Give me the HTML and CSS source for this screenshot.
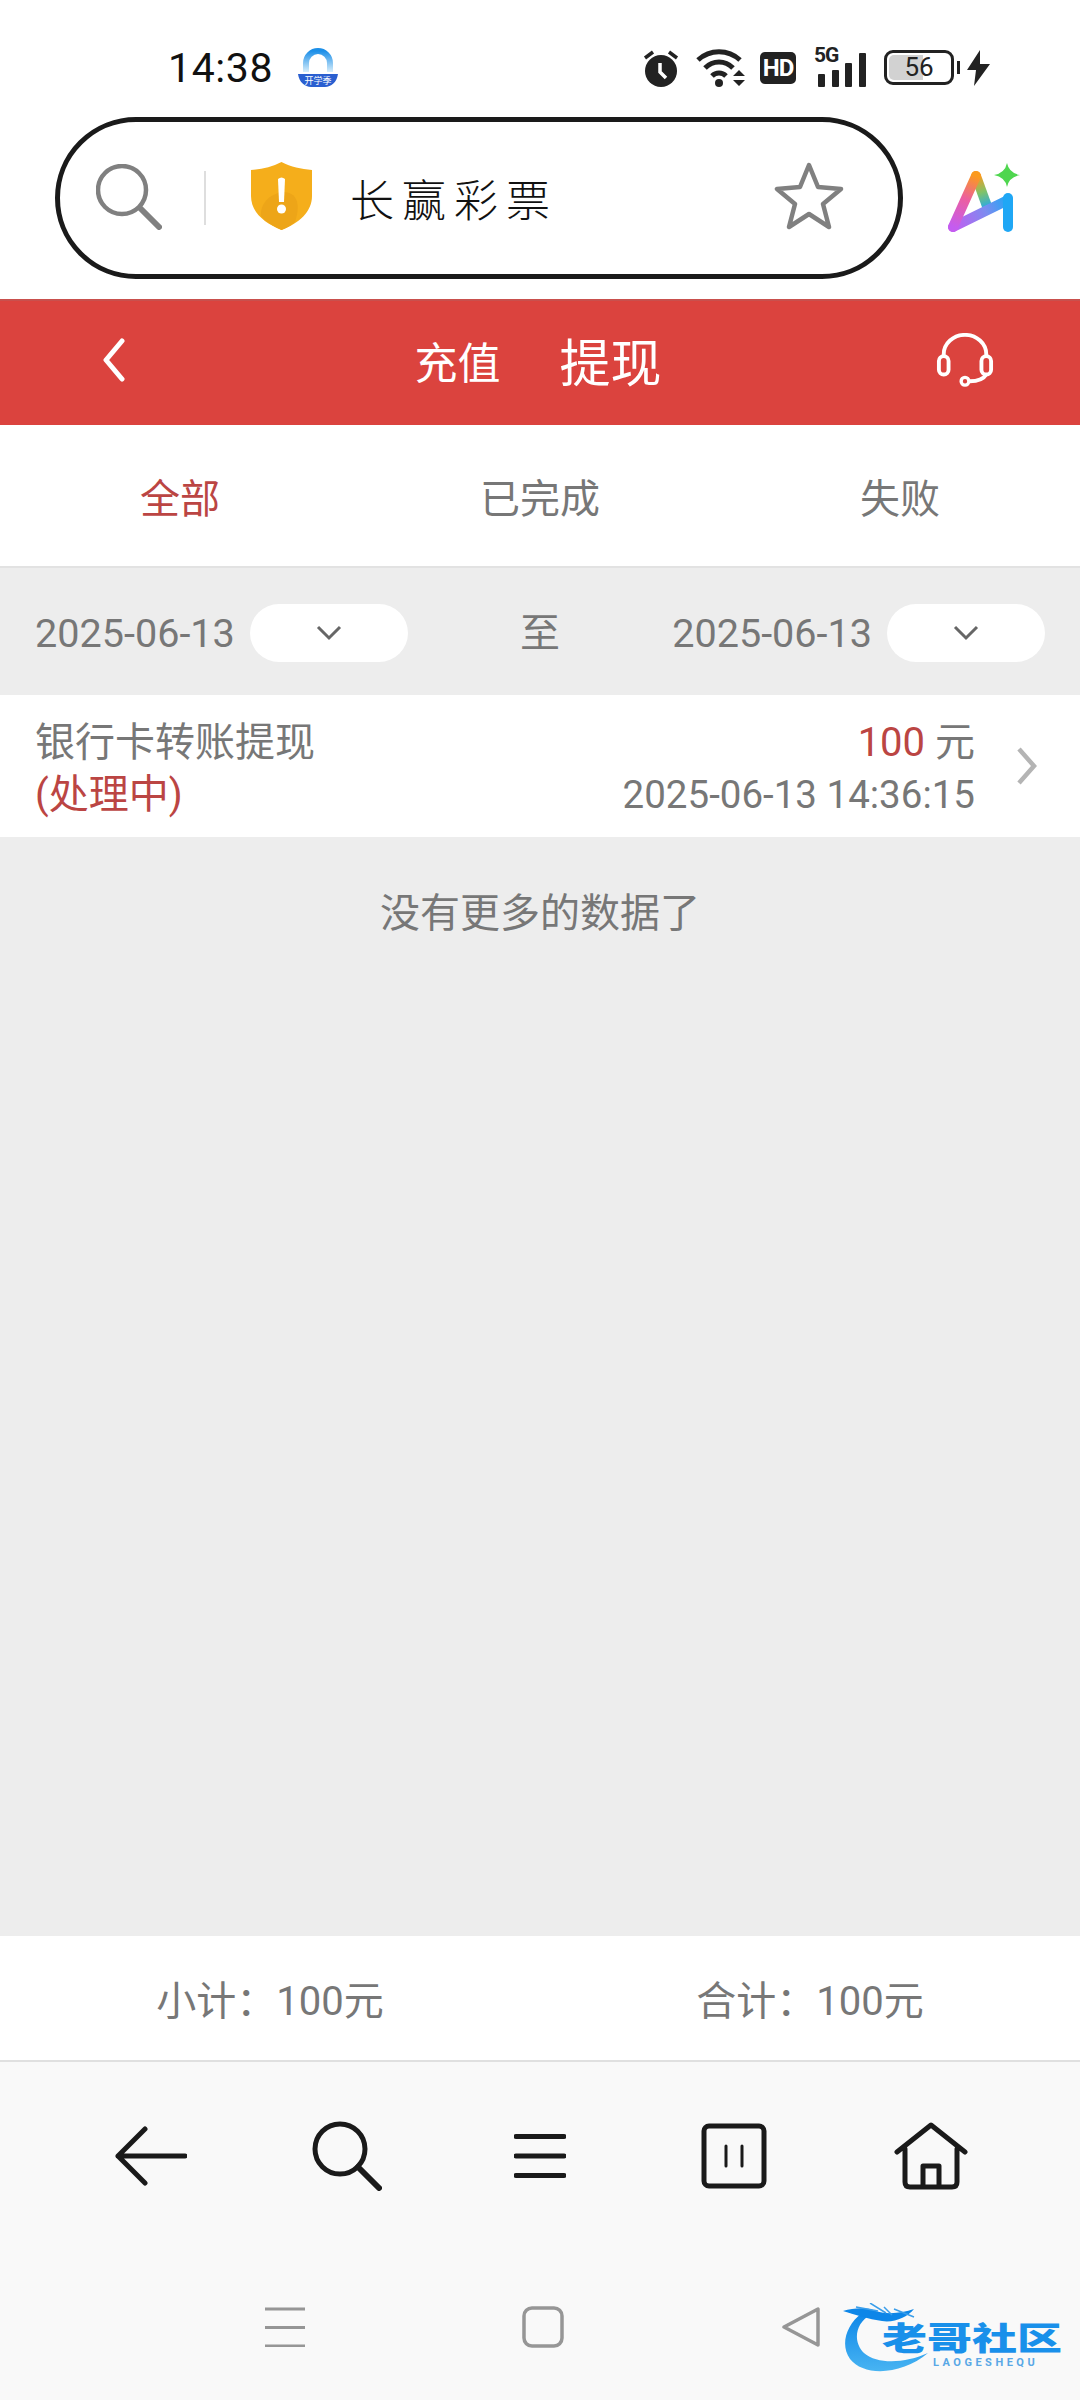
FILE: index.html
```html
<!DOCTYPE html>
<html lang="zh-CN">
<head>
    <meta charset="UTF-8">
    <meta name="viewport" content="width=device-width, initial-scale=1.0">
    <title>提现</title>
    <link rel="stylesheet" href="styles.css">
</head>
<body>
    <div class="status-bar">
        <span class="clock">14:38</span>
        <svg class="app-badge" width="42" height="40" viewBox="0 0 42 40">
            <defs>
                <linearGradient id="archFill" x1="0" y1="0" x2="0" y2="1">
                    <stop offset="0" stop-color="#1c8fe8"/>
                    <stop offset="1" stop-color="#d8eefb"/>
                </linearGradient>
            </defs>
            <path d="M9 24 V15 A12 12 0 0 1 33 15 V24" fill="none" stroke="url(#archFill)" stroke-width="6"/>
            <path d="M1 26 H41 C40 34 34 39 28 39 H14 C8 39 2 34 1 26Z" fill="#2a5fd0"/>
            <text x="21" y="36" text-anchor="middle" font-size="9" fill="#fff" font-family="Noto Sans CJK SC, sans-serif">开学季</text>
        </svg>
        <div class="status-icons">
            <svg class="alarm" width="36" height="38" viewBox="0 0 36 38">
                <circle cx="18" cy="22" r="16" fill="#222"/>
                <path d="M2 9 L10 3 M34 9 L26 3" stroke="#222" stroke-width="3.5"/>
                <path d="M17 14 V23 L23 29" fill="none" stroke="#fff" stroke-width="3.5"/>
            </svg>
            <svg width="50" height="40" viewBox="0 0 50 40">
                <path d="M2 12 C14 1 32 1 44 12" fill="none" stroke="#222" stroke-width="5"/>
                <path d="M9 20 C17 12 29 12 37 20" fill="none" stroke="#222" stroke-width="5"/>
                <path d="M16 28 C20 24 26 24 30 28" fill="none" stroke="#222" stroke-width="5"/>
                <circle cx="23" cy="35" r="4" fill="#222"/>
                <path d="M43 22 L49 28 H37Z M37 32 H49 L43 38Z" fill="#222"/>
            </svg>
            <span class="hd-badge">HD</span>
            <div class="signal">
                <span class="signal-label">5G</span>
                <svg width="53" height="36" viewBox="0 0 53 36">
                    <rect x="4" y="23" width="7" height="13" rx="1" fill="#222"/>
                    <rect x="18" y="19" width="7" height="17" rx="1" fill="#222"/>
                    <rect x="31" y="12" width="7" height="24" rx="1" fill="#222"/>
                    <rect x="45" y="2" width="7" height="34" rx="1" fill="#222"/>
                </svg>
            </div>
            <div class="battery"><span class="battery-fill"></span><span class="battery-num">56</span></div>
            <svg class="bolt" width="23" height="36" viewBox="0 0 23 36">
                <path d="M13 0 L0 20 H9 L7 36 L23 14 H13Z" fill="#222"/>
            </svg>
        </div>
    </div>

    <div class="address-row">
        <div class="address-pill">
            <svg class="address-search" width="66" height="66" viewBox="0 0 66 66">
                <circle cx="26" cy="26" r="24" fill="none" stroke="#808080" stroke-width="4.5"/>
                <path d="M44 44 L63 63" stroke="#808080" stroke-width="6" stroke-linecap="round"/>
            </svg>
            <span class="address-divider"></span>
            <svg class="shield" width="61" height="68" viewBox="0 0 61 68">
                <path d="M30.5 0 C40 5 50 7 61 8 V34 C61 50 48 61 30.5 68 C13 61 0 50 0 34 V8 C11 7 21 5 30.5 0Z" fill="#f5ae1b"/>
                <path d="M30.5 68 C22 64 15 60 10 54 C9 42 18 32 32 30 C46 30 50 42 44 60 C40 63 36 66 30.5 68Z" fill="#eda518"/>
                <path d="M27 17 Q30.5 14 34 17 L33 40 H28Z" fill="#fff"/>
                <circle cx="30.5" cy="47" r="4.5" fill="#fff"/>
            </svg>
            <span class="site-name">长赢彩票</span>
            <svg class="star" width="70" height="68" viewBox="0 0 70 68">
                <path d="M35 3 L44 25 L67 27 L49 42 L55 65 L35 52 L15 65 L21 42 L3 27 L26 25Z" fill="none" stroke="#808080" stroke-width="4.5" stroke-linejoin="round"/>
            </svg>
        </div>
        <svg class="ai-icon" width="74" height="72" viewBox="0 0 74 72">
            <defs>
                <linearGradient id="aiLeft" gradientUnits="userSpaceOnUse" x1="6" y1="65" x2="29" y2="14">
                    <stop offset="0" stop-color="#c45cf0"/>
                    <stop offset="0.55" stop-color="#ec5fa0"/>
                    <stop offset="1" stop-color="#fb9a1e"/>
                </linearGradient>
                <linearGradient id="aiBar" gradientUnits="userSpaceOnUse" x1="6" y1="65" x2="61" y2="38">
                    <stop offset="0" stop-color="#c45cf0"/>
                    <stop offset="0.6" stop-color="#7c8cf0"/>
                    <stop offset="1" stop-color="#1fa7f5"/>
                </linearGradient>
                <linearGradient id="aiRight" gradientUnits="userSpaceOnUse" x1="29" y1="14" x2="41" y2="47">
                    <stop offset="0" stop-color="#fb9a1e"/>
                    <stop offset="0.5" stop-color="#7fc36a"/>
                    <stop offset="1" stop-color="#1fa7f5"/>
                </linearGradient>
            </defs>
            <path d="M29 14 L41 47" fill="none" stroke="url(#aiRight)" stroke-width="10" stroke-linecap="round"/>
            <path d="M6 65 L61 38" fill="none" stroke="url(#aiBar)" stroke-width="10" stroke-linecap="round"/>
            <path d="M61 36 V65" fill="none" stroke="#1fa7f5" stroke-width="10" stroke-linecap="round"/>
            <path d="M6 65 L29 14" fill="none" stroke="url(#aiLeft)" stroke-width="10" stroke-linecap="round"/>
            <path d="M60 1 Q62 11 73 13 Q62 15 60 25 Q58 15 47 13 Q58 11 60 1Z" fill="#4fd64f"/>
        </svg>
    </div>

    <div class="top-bar">
        <svg class="back-icon" width="24" height="44" viewBox="0 0 24 44">
            <path d="M20 3 L4 22 L20 41" fill="none" stroke="#fff" stroke-width="5" stroke-linecap="round" stroke-linejoin="round"/>
        </svg>
        <div class="top-tabs">
            <span class="top-tab">充值</span>
            <span class="top-tab top-tab-on">提现</span>
        </div>
        <svg class="service-icon" width="58" height="54" viewBox="0 0 60 54">
            <path d="M8 22 V21 A22 20 0 0 1 52 21 V22" fill="none" stroke="#fff" stroke-width="4"/>
            <rect x="3" y="23" width="10" height="19" rx="5" fill="none" stroke="#fff" stroke-width="4"/>
            <rect x="47" y="23" width="10" height="19" rx="5" fill="none" stroke="#fff" stroke-width="4"/>
            <path d="M52 42 C49 47 43 49 35 49" fill="none" stroke="#fff" stroke-width="4"/>
            <circle cx="30" cy="49" r="4" fill="none" stroke="#fff" stroke-width="3.5"/>
        </svg>
    </div>

    <div class="status-tabs">
        <span class="status-tab status-tab-on">全部</span>
        <span class="status-tab">已完成</span>
        <span class="status-tab">失败</span>
    </div>

    <main class="content">
        <div class="date-row">
            <div class="date-field">
                <span class="date-text">2025-06-13</span>
                <span class="date-pill">
                    <svg width="26" height="16" viewBox="0 0 26 16"><path d="M2 2 L13 13 L24 2" fill="none" stroke="#666" stroke-width="3"/></svg>
                </span>
            </div>
            <span class="date-to">至</span>
            <div class="date-field">
                <span class="date-text">2025-06-13</span>
                <span class="date-pill">
                    <svg width="26" height="16" viewBox="0 0 26 16"><path d="M2 2 L13 13 L24 2" fill="none" stroke="#666" stroke-width="3"/></svg>
                </span>
            </div>
        </div>

        <div class="record">
            <div class="record-left">
                <div>银行卡转账提现</div>
                <div class="red">(处理中)</div>
            </div>
            <div class="record-right">
                <div class="record-amount"><span class="red">100</span> 元</div>
                <div>2025-06-13 14:36:15</div>
            </div>
            <svg class="record-arrow" width="22" height="40" viewBox="0 0 22 40">
                <path d="M3 3 L18 20 L3 37" fill="none" stroke="#b4b4b4" stroke-width="4.5"/>
            </svg>
        </div>

        <p class="no-more">没有更多的数据了</p>
    </main>

    <div class="summary">
        <span>小计：100元</span>
        <span>合计：100元</span>
    </div>

    <div class="browser-bar">
        <div class="tool">
            <svg class="tool-back" width="72" height="60" viewBox="0 0 72 60">
                <path d="M30 3 L3 30 L30 57 M3 30 H70" fill="none" stroke="#1a1a1a" stroke-width="5" stroke-linecap="round" stroke-linejoin="round"/>
            </svg>
        </div>
        <div class="tool">
            <svg class="tool-search" width="70" height="70" viewBox="0 0 70 70">
                <circle cx="28" cy="28" r="25" fill="none" stroke="#1a1a1a" stroke-width="5"/>
                <path d="M46 46 L67 67" stroke="#1a1a1a" stroke-width="6" stroke-linecap="round"/>
            </svg>
        </div>
        <div class="tool">
            <svg class="tool-menu" width="52" height="46" viewBox="0 0 52 46">
                <path d="M2 3.500 H50 M2 23 H50 M2 42.500 H50" stroke="#1a1a1a" stroke-width="5" stroke-linecap="round"/>
            </svg>
        </div>
        <div class="tool">
            <svg class="tool-tabs" width="66" height="66" viewBox="0 0 66 66">
                <rect x="3" y="3" width="60" height="60" rx="5" fill="none" stroke="#1a1a1a" stroke-width="5"/>
                <path d="M25 23 V43 M41 23 V43" stroke="#1a1a1a" stroke-width="3" stroke-linecap="round"/>
            </svg>
        </div>
        <div class="tool">
            <svg class="tool-home" width="74" height="68" viewBox="0 0 74 68">
                <path d="M3 30 L37 3 L71 30 M11 27 V60 Q11 65 16 65 H58 Q63 65 63 60 V27 M29 65 V44 H45 V65" fill="none" stroke="#1a1a1a" stroke-width="5" stroke-linecap="round" stroke-linejoin="round"/>
            </svg>
        </div>
    </div>

    <div class="system-nav">
        <div class="nav-key">
            <svg width="42" height="40" viewBox="0 0 42 40"><path d="M1 2 H41 M1 20.500 H41 M1 39 H41" stroke="#969696" stroke-width="3"/></svg>
        </div>
        <div class="nav-key">
            <svg width="42" height="42" viewBox="0 0 42 42"><rect x="2" y="2" width="38" height="38" rx="8" fill="none" stroke="#969696" stroke-width="3.500"/></svg>
        </div>
        <div class="nav-key">
            <svg width="40" height="40" viewBox="0 0 40 40"><path d="M3 20 L37 2 V38Z" fill="none" stroke="#969696" stroke-width="3.500" stroke-linejoin="round"/></svg>
        </div>

        <div class="watermark">
            <svg class="watermark-dragon" width="100" height="72" viewBox="0 0 100 72">
                <defs>
                    <linearGradient id="ringFill" x1="0" y1="0" x2="0" y2="1">
                        <stop offset="0" stop-color="#0d86e8"/>
                        <stop offset="1" stop-color="#48b4f2"/>
                    </linearGradient>
                </defs>
                <path d="M20 10 C4 22 -2 42 8 56 C22 74 60 72 86 50 C64 60 36 62 22 50 C10 38 14 20 28 12Z" fill="url(#ringFill)"/>
                <path d="M1 8 C12 5 24 4 34 8 C46 12 60 10 72 6 C66 14 52 20 40 18 C26 16 14 12 1 8Z" fill="#0d86e8"/>
                <path d="M14 4 L36 8 M28 0 L44 10 M42 4 L50 12 M52 6 L72 14" stroke="#3a9eea" stroke-width="1.500" fill="none"/>
            </svg>
            <span class="watermark-name">老哥社区</span>
            <span class="watermark-pinyin">LAOGESHEQU</span>
        </div>
    </div>
</body>
</html>
```

FILE: styles.css
```css
* {
    box-sizing: border-box;
}
body {
    display: flex;
    flex-direction: column;
    width: 1080px;
    height: 2400px;
    margin: 0;
    background-color: #ededed;
    font-family: Roboto, "Noto Sans CJK SC", sans-serif;
    font-size: 40px;
    color: #777;
    overflow: hidden;
}

/* phone status bar */
.status-bar {
    display: flex;
    align-items: center;
    height: 117px;
    padding: 18px 90px 0 168px;
    background-color: #fff;
    color: #111;
}
.clock {
    font-size: 41px;
    letter-spacing: 0.6px;
}
.app-badge {
    margin-left: 24px;
}
.status-icons {
    display: flex;
    align-items: center;
    margin-left: auto;
}
.alarm {
    margin-right: 17px;
}
.hd-badge {
    width: 36px;
    height: 32px;
    margin-left: 14px;
    border-radius: 5px;
    background-color: #222;
    color: #fff;
    font-size: 24px;
    font-weight: 700;
    line-height: 32px;
    text-align: center;
    letter-spacing: -1px;
}
.signal {
    position: relative;
    width: 53px;
    height: 36px;
    margin-left: 18px;
}
.signal-label {
    position: absolute;
    top: -6px;
    left: 0;
    color: #222;
    font-size: 21px;
    font-weight: 700;
    line-height: 22px;
    letter-spacing: -1px;
}
.battery {
    position: relative;
    width: 70px;
    height: 35px;
    margin-left: 17px;
    border: 3px solid #222;
    border-radius: 9px;
    font-size: 26px;
    line-height: 29px;
    text-align: center;
    color: #222;
}
.battery::after {
    content: "";
    position: absolute;
    top: 8px;
    right: -9px;
    width: 3px;
    height: 13px;
    background-color: #222;
}
.battery-fill {
    position: absolute;
    top: 2px;
    bottom: 2px;
    left: 2px;
    width: 34px;
    border-radius: 5px 0 0 5px;
    background-color: #d2d2d2;
}
.battery-num {
    position: relative;
}
.bolt {
    margin-left: 13px;
}

/* browser address bar */
.address-row {
    display: flex;
    align-items: center;
    height: 182px;
    padding: 0 0 20px 55px;
    background-color: #fff;
}
.address-pill {
    display: flex;
    align-items: center;
    width: 848px;
    height: 162px;
    padding-left: 36px;
    border: 5px solid #1a1a1a;
    border-radius: 81px;
}
.address-search {
    margin-bottom: 2px;
}
.address-divider {
    width: 2px;
    height: 54px;
    margin-left: 42px;
    background-color: #dedede;
}
.shield {
    margin-left: 45px;
    margin-bottom: 4px;
}
.site-name {
    margin-left: 38px;
    color: #111;
    font-size: 44px;
    font-weight: 300;
    letter-spacing: 8px;
}
.star {
    margin-left: auto;
    margin-right: 54px;
    margin-bottom: 5px;
}
.ai-icon {
    margin-left: 44px;
}

/* red title bar */
.top-bar {
    display: flex;
    align-items: center;
    justify-content: space-between;
    height: 126px;
    padding: 0 86px 7px 102px;
    border-top: 2px solid #c9504d;
    background-color: #db433e;
    color: #fff;
}
.top-tabs {
    display: flex;
    align-items: center;
    gap: 59px;
    margin-left: 14px;
}
.top-tab {
    font-size: 43px;
}
.top-tab-on {
    font-size: 51px;
}

/* status filter */
.status-tabs {
    display: grid;
    grid-template-columns: 1fr 1fr 1fr;
    height: 143px;
    align-items: center;
    border-bottom: 2px solid #e2e2e2;
    background-color: #fff;
    text-align: center;
}
.status-tab-on {
    color: #bb4543;
}

.content {
    flex: 1;
}
.date-row {
    display: flex;
    align-items: center;
    justify-content: space-between;
    height: 127px;
    padding: 2px 35px 0;
}
.date-field {
    display: flex;
    align-items: center;
    gap: 15px;
}
.date-text {
    padding-top: 2px;
    font-size: 39.6px;
}
.date-pill {
    display: flex;
    align-items: center;
    justify-content: center;
    width: 158px;
    height: 58px;
    border-radius: 29px;
    background-color: #fff;
}
.date-to {
    padding-bottom: 6px;
}

.record {
    display: flex;
    align-items: center;
    height: 142px;
    padding: 6px 42px 0 35px;
    background-color: #fff;
    line-height: 52px;
}
.record-right {
    margin-left: auto;
    font-size: 38.5px;
    text-align: right;
}
.record-amount {
    font-size: 40px;
}
.record-arrow {
    margin-left: 41px;
    margin-bottom: 6px;
}
.red {
    color: #bb4543;
}
.no-more {
    margin: 51px 0 0;
    line-height: 52px;
    text-align: center;
}

.summary {
    display: grid;
    grid-template-columns: 1fr 1fr;
    height: 126px;
    align-items: center;
    border-bottom: 2px solid #e0e0e0;
    background-color: #fff;
    text-align: center;
}

/* browser bottom bar */
.browser-bar {
    display: grid;
    grid-template-columns: repeat(5, 195px);
    height: 191px;
    padding: 0 0 3px 52px;
    background-color: #f9f9f9;
}
.tool {
    display: flex;
    align-items: center;
    justify-content: center;
}
.tool-back {
    margin-left: 2px;
}
.tool-search {
    margin-left: 4px;
}
.tool-tabs {
    margin-right: 2px;
}
.tool-home {
    margin-left: 2px;
}
.system-nav {
    position: relative;
    display: grid;
    grid-template-columns: repeat(3, 258px);
    height: 147px;
    padding-left: 156px;
    background-color: #f9f9f9;
}
.nav-key {
    display: flex;
    align-items: center;
    justify-content: center;
}

/* watermark over the nav bar */
.watermark {
    position: absolute;
    top: 50px;
    left: 842px;
    width: 222px;
    height: 72px;
}
.watermark-dragon {
    position: absolute;
    top: 0;
    left: 0;
}
.watermark-name {
    position: absolute;
    top: 11px;
    left: 40px;
    color: #1990ea;
    font-size: 45px;
    font-weight: 900;
    line-height: 50px;
    white-space: nowrap;
    transform: scaleY(0.72);
}
.watermark-pinyin {
    position: absolute;
    top: 53px;
    left: 91px;
    color: #5aa8e6;
    font-size: 11px;
    font-weight: 700;
    line-height: 13px;
    letter-spacing: 3.500px;
    white-space: nowrap;
}
```
